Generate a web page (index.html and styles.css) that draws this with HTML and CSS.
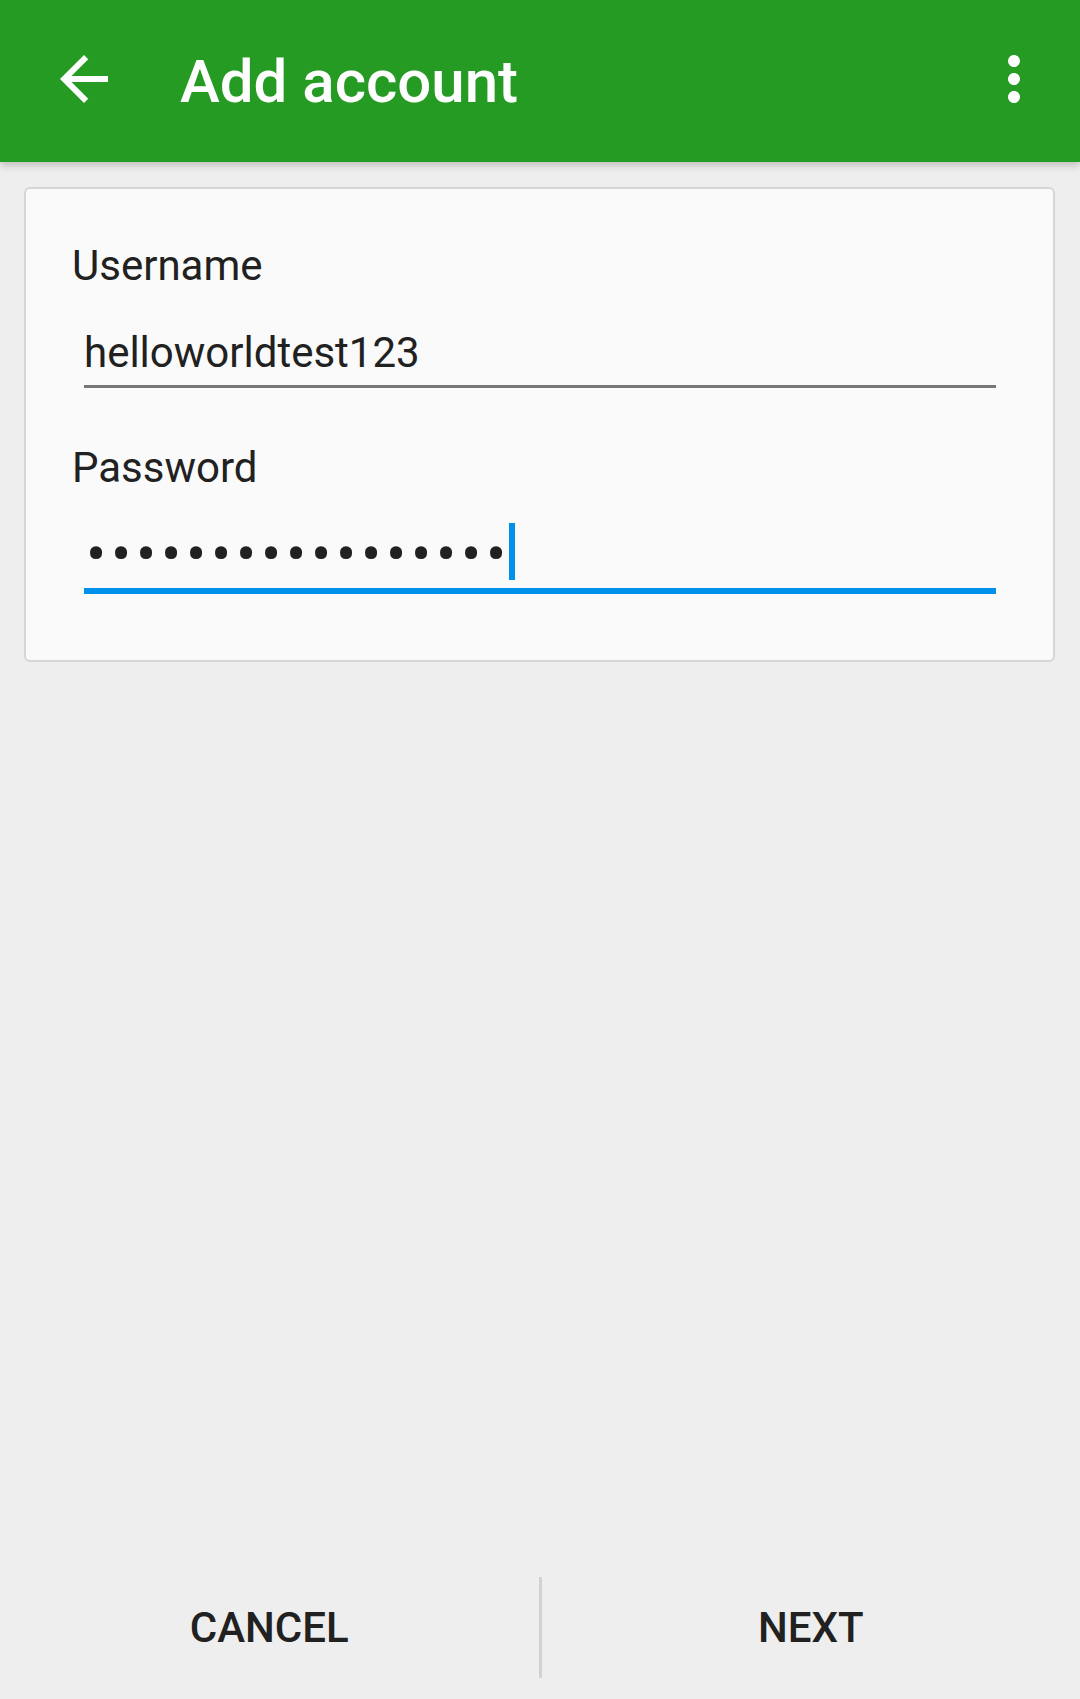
FILE: index.html
```html
<!DOCTYPE html>
<html lang="en">
<head>
<meta charset="utf-8">
<title>Add account</title>
<link rel="stylesheet" href="styles.css">
</head>
<body>
<header class="appbar">
  <div class="icon back" aria-label="Back">
    <svg viewBox="0 0 24 24" width="72" height="72"><path fill="#ffffff" d="M20 11H7.830l5.59-5.59L12 4l-8 8 8 8 1.41-1.41L7.83 13H20v-2z"/></svg>
  </div>
  <h1 class="title">Add account</h1>
  <div class="icon more" aria-label="More options">
    <svg viewBox="0 0 24 24" width="72" height="72"><path fill="#ffffff" d="M12 8c1.1 0 2-.9 2-2s-.9-2-2-2-2 .9-2 2 .9 2 2 2zm0 2c-1.1 0-2 .9-2 2s.9 2 2 2 2-.9 2-2-.9-2-2-2zm0 6c-1.1 0-2 .9-2 2s.9 2 2 2 2-.9 2-2-.9-2-2-2z"/></svg>
  </div>
</header>
<main class="content">
  <section class="card">
    <div class="label">Username</div>
    <div class="field">helloworldtest123</div>
    <div class="label label-gap">Password</div>
    <div class="field focused"><span class="dots">•••••••••••••••••</span><span class="cursor"></span></div>
  </section>
</main>
<footer class="buttonbar">
  <div class="btn">Cancel</div>
  <div class="divider"></div>
  <div class="btn">Next</div>
</footer>
</body>
</html>
```

FILE: styles.css
```css
html, body {
  margin: 0;
  padding: 0;
}
body {
  width: 1080px;
  height: 1699px;
  background: #eeeeee;
  font-family: Roboto, "Noto Sans", "Liberation Sans", sans-serif;
  color: #212121;
  display: flex;
  flex-direction: column;
  overflow: hidden;
}
.appbar {
  position: relative;
  z-index: 2;
  height: 162px;
  box-sizing: border-box;
  padding: 0 30px 4px 48px;
  background: #259b24;
  display: flex;
  align-items: center;
  box-shadow: 0 3px 8px rgba(0, 0, 0, 0.22);
}
.icon {
  width: 72px;
  height: 72px;
  flex: none;
}
.icon svg {
  display: block;
}
.title {
  margin: 6px 0 0 60px;
  flex: 1;
  font-size: 60px;
  font-weight: 500;
  color: #ffffff;
  line-height: 1.172;
}
.content {
  flex: 1;
  padding: 25px 25px 0 24px;
}
.card {
  background: #fafafa;
  border: 2px solid #d6d6d6;
  border-radius: 6px;
  padding: 52px 57px 66px 46px;
}
.label {
  font-size: 42px;
  line-height: 49px;
  color: #212121;
}
.label-gap {
  margin-top: 55px;
}
.field {
  margin: 38px 0 0 12px;
  font-size: 42px;
  line-height: 49px;
  padding-bottom: 8px;
  border-bottom: 3px solid #777777;
  color: #212121;
  white-space: nowrap;
}
.field.focused {
  margin-top: 37px;
  padding-left: 2px;
  border-bottom: 6px solid #0091ea;
}
.dots {
  font-size: 60px;
  line-height: 0;
  letter-spacing: 4.75px;
  vertical-align: -7px;
}
.cursor {
  display: inline-block;
  width: 6px;
  height: 57px;
  margin: -10px 0 0 -2px;
  vertical-align: -12px;
  background: #0091ea;
}
.buttonbar {
  height: 144px;
  display: flex;
  align-items: center;
}
.btn {
  flex: 1;
  text-align: center;
  font-size: 42px;
  font-weight: 500;
  text-transform: uppercase;
  color: #212121;
}
.divider {
  width: 3px;
  height: 101px;
  background: #d2d2d2;
  flex: none;
}
```
